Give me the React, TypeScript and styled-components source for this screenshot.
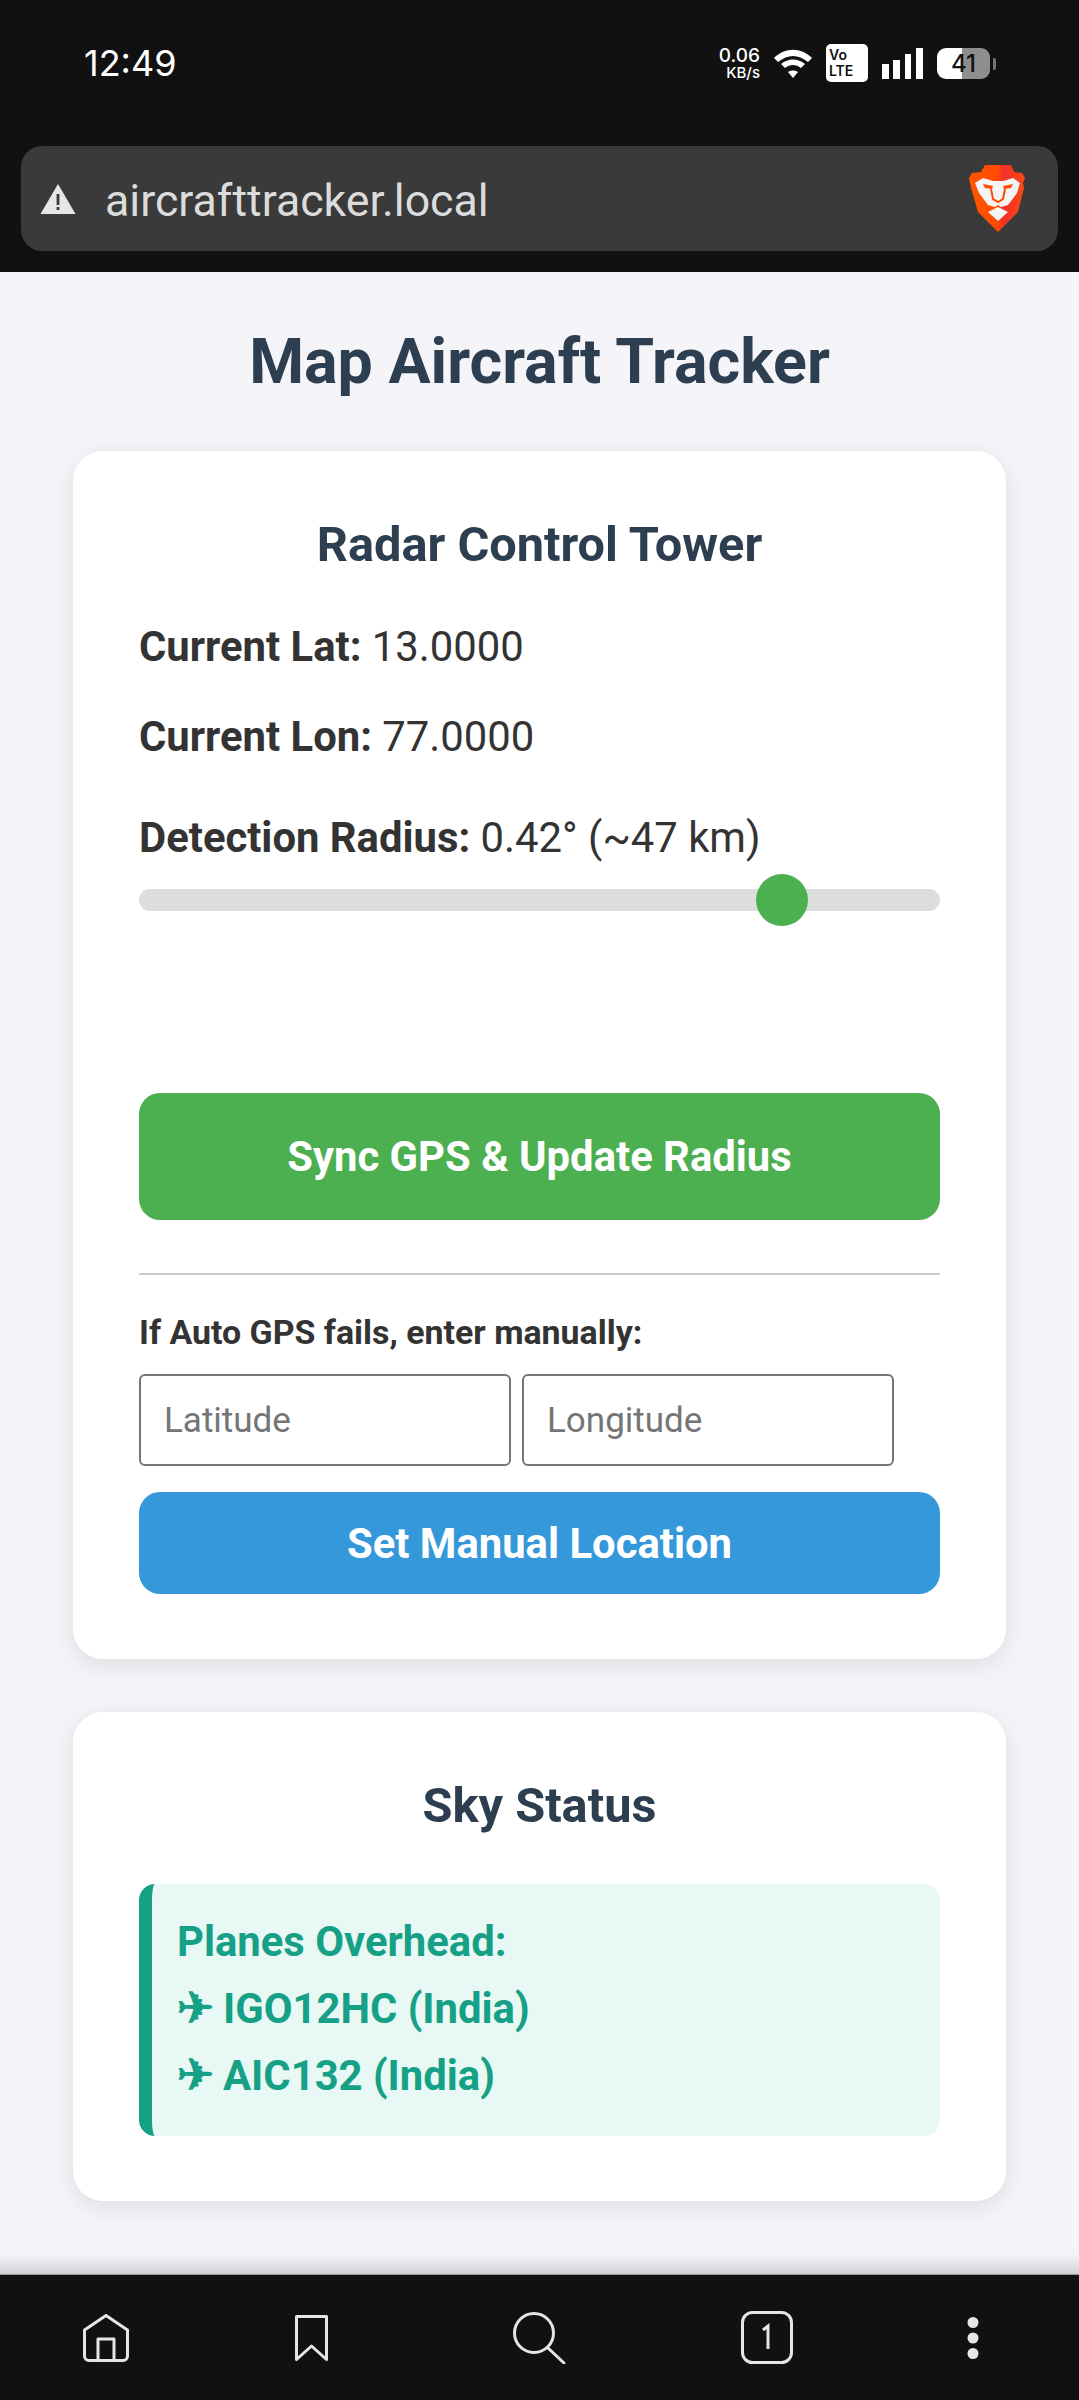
import React from "react";
import styled, { createGlobalStyle } from "styled-components";

const GlobalStyle = createGlobalStyle`
  html, body {
    margin: 0;
    padding: 0;
    background: #f4f4f9;
  }
  * {
    box-sizing: border-box;
  }
`;

const Screen = styled.div`
  width: 1079px;
  height: 2400px;
  display: flex;
  flex-direction: column;
  overflow: hidden;
  font-family: Roboto, "Liberation Sans", sans-serif;
  color: #333;
`;

const BrowserChrome = styled.header`
  height: 272px;
  flex: none;
  background: #111112;
  padding: 0 21px;
  display: flex;
  flex-direction: column;
`;

const StatusBar = styled.div`
  height: 146px;
  padding: 41px 68px 0 63px;
  display: flex;
  justify-content: space-between;
  align-items: flex-start;
  color: #fff;
`;

const Clock = styled.span`
  font-size: 36px;
  line-height: 44px;
  font-family: Inter, Roboto, sans-serif;
  font-weight: 400;
`;

const StatusIcons = styled.div`
  display: flex;
  align-items: center;
  gap: 14px;
  height: 40px;
  margin-top: 2px;
`;

const NetSpeed = styled.div`
  display: flex;
  flex-direction: column;
  align-items: flex-end;
  font-family: Inter, Roboto, sans-serif;
  font-weight: 500;
  font-size: 19px;
  line-height: 19px;

  small {
    font-size: 15px;
    line-height: 15px;
  }
`;

const VoLte = styled.div`
  width: 42px;
  height: 38px;
  border-radius: 5px;
  background: #fff;
  color: #111;
  font-family: Inter, Roboto, sans-serif;
  font-size: 14px;
  line-height: 16px;
  font-weight: 600;
  padding: 3px 0 0 3px;
`;

const Battery = styled.div`
  position: relative;
  width: 53px;
  height: 31px;
  border-radius: 9px;
  background: linear-gradient(90deg, #fff 0 47%, #8e8e8e 47% 100%);
  color: #111;
  font-family: Inter, Roboto, sans-serif;
  font-size: 24px;
  font-weight: 500;
  line-height: 31px;
  text-align: center;

  &::after {
    content: "";
    position: absolute;
    right: -6px;
    top: 10px;
    width: 3px;
    height: 12px;
    border-radius: 0 2px 2px 0;
    background: #6f6f6f;
  }
`;

const AddressBar = styled.div`
  height: 105px;
  background: #3a3a3a;
  border-radius: 21px;
  display: flex;
  align-items: center;
  padding: 0 33px 0 19px;
`;

const AddressText = styled.span`
  flex: 1;
  margin: 5px 0 0 29px;
  color: #dcdcdc;
  font-size: 44.700px;
  font-weight: 400;
`;

const Page = styled.main`
  flex: 1;
  min-height: 0;
  background: #f4f4f9;
  padding: 0 73px;
  position: relative;

  &::after {
    content: "";
    position: absolute;
    left: 0;
    right: 0;
    bottom: 0;
    height: 20px;
    background: linear-gradient(180deg, rgba(0, 0, 0, 0), rgba(0, 0, 0, 0.14));
  }
`;

const PageTitle = styled.h1`
  margin: 0;
  padding-top: 55px;
  height: 179px;
  text-align: center;
  font-size: 62.700px;
  line-height: 70px;
  font-weight: 700;
  color: #2c3e50;
`;

const Card = styled.section`
  background: #fff;
  border-radius: 30px;
  box-shadow: 0 6px 24px rgba(0, 0, 0, 0.1);
  padding: 66px 66px 65px;
  margin-bottom: 53px;
`;

const CardTitle = styled.h2`
  margin: 0;
  text-align: center;
  font-size: 48.700px;
  line-height: 56px;
  font-weight: 700;
  color: #2c3e50;
`;

const ReadoutList = styled.div`
  margin-top: 49px;
`;

const Readout = styled.p<{ $gap: number }>`
  margin: 0 0 ${({ $gap }) => $gap}px;
  font-size: 41.800px;
  line-height: 50px;

  b {
    font-weight: 700;
  }
`;

const SliderTrack = styled.div`
  position: relative;
  height: 22px;
  margin-top: 26px;
  background: #dddddd;
  border-radius: 11px;
`;

const SliderThumb = styled.div`
  position: absolute;
  top: -15px;
  width: 52px;
  height: 52px;
  border-radius: 50%;
  background: #4caf50;
`;

const ActionButton = styled.button<{ $bg: string; $height: number; $top: number }>`
  display: block;
  width: 100%;
  height: ${({ $height }) => $height}px;
  margin-top: ${({ $top }) => $top}px;
  border: 0;
  border-radius: 21px;
  background: ${({ $bg }) => $bg};
  color: #fff;
  font-family: inherit;
  font-size: 41.800px;
  font-weight: 700;
`;

const Divider = styled.hr`
  margin: 53px 0 0;
  border: 0;
  height: 2px;
  background: #cccccc;
`;

const ManualLabel = styled.p`
  margin: 36px 0 0;
  font-size: 33.900px;
  line-height: 44px;
  font-weight: 700;
`;

const ManualInputs = styled.div`
  display: flex;
  gap: 11px;
  margin-top: 19px;
`;

const CoordInput = styled.input`
  width: 372px;
  height: 92px;
  padding: 0 23px;
  border: 2px solid #767676;
  border-radius: 6px;
  background: #fff;
  font-family: inherit;
  font-size: 35px;

  &::placeholder {
    color: #757575;
    opacity: 1;
  }
`;

const PlanesBox = styled.div`
  margin-top: 50px;
  height: 252px;
  padding: 24px 0 0 25px;
  background: #e8f8f5;
  border-left: 13px solid #16a085;
  border-radius: 16px;
  color: #16a085;
  font-size: 41.800px;
  line-height: 67px;
  font-weight: 700;
`;

const PlaneGlyph = styled.span`
  display: inline-block;
  width: 46px;
  font-size: 44px;
  line-height: 40px;
  font-weight: 700;
`;

const BottomNav = styled.nav`
  height: 126px;
  flex: none;
  background: #111112;
  border-top: 1px solid #999;
  display: grid;
  grid-template-columns: 212px 199px 257px 198px 213px;
  align-items: center;
  justify-items: center;
`;

const WarningIcon = () => (
  <svg width="36" height="32" viewBox="0 0 36 32">
    <path d="M18 1 35.500 31H.5z" fill="#e6e6e6" />
    <rect x="16.600" y="11" width="2.800" height="11" fill="#3a3a3a" />
    <rect x="16.600" y="24" width="2.800" height="3" fill="#3a3a3a" />
  </svg>
);

const BraveLogo = () => (
  <svg width="56" height="67" viewBox="0 0 56 67">
    <defs>
      <linearGradient id="brave" x1="0" x2="1" y1="0" y2="0">
        <stop offset="0" stopColor="#ff5500" />
        <stop offset="0.5" stopColor="#ff4c00" />
        <stop offset="0.62" stopColor="#f4302a" />
        <stop offset="1" stopColor="#fb4a10" />
      </linearGradient>
    </defs>
    <path
      d="M16 0h26l3 7 8 1 3 5-2 5 1 5-6 24-20 20L9 47 2 23l-1-5-1-5 3-5 9-1z"
      fill="url(#brave)"
    />
    <path d="M6 18l8-5 10 3h10l10-3 7 5-3 10-9 12-7 2-3-2-3 2-7-2-9-12z" fill="#f4f4f4" />
    <path d="M14 19l10 2-1 3-7-1zM44 19l-10 2 1 3 7-1z" fill="#ff4c00" />
    <path d="M22 24l2 10 5 3 5-3 2-10" fill="none" stroke="#ff4c00" strokeWidth="2" />
    <path d="M19 47l10-5 10 5-10 9z" fill="#f4f4f4" />
  </svg>
);

const WifiIcon = () => (
  <svg width="38" height="29" viewBox="0 0 38 29">
    <path d="M0 9c11-11 27-11 38 0l-4 4C24 5 14 5 4 13z" fill="#fff" />
    <path d="M7 15c7-6 17-6 24 0l-4 4c-5-4-11-4-16 0z" fill="#fff" />
    <path d="M14 23c3-2 7-2 10 0l-5 6z" fill="#fff" />
  </svg>
);

const SignalIcon = () => (
  <svg width="41" height="31" viewBox="0 0 41 31" fill="#fff">
    <rect x="0" y="16" width="7" height="15" />
    <rect x="11" y="12" width="7" height="19" />
    <rect x="23" y="6" width="6" height="25" />
    <rect x="34" y="0" width="7" height="31" />
  </svg>
);

const navStroke = {
  fill: "none",
  stroke: "#e6e6e6",
  strokeWidth: 3,
  strokeLinejoin: "round" as const,
  strokeLinecap: "round" as const,
};

const HomeIcon = () => (
  <svg width="46" height="48" viewBox="0 0 46 48" {...navStroke}>
    <path d="M23 1.500 44.500 16v26a4.500 4.500 0 0 1-4.500 4.500H6A4.500 4.500 0 0 1 1.500 42V16z" />
    <path d="M15 46V25h16v21" />
  </svg>
);

const BookmarkIcon = () => (
  <svg width="33" height="46" viewBox="0 0 33 46" {...navStroke}>
    <path d="M1.500 1.500h30v43L16.500 31l-15 13.500z" />
  </svg>
);

const SearchIcon = () => (
  <svg width="53" height="52" viewBox="0 0 53 52" {...navStroke}>
    <circle cx="21" cy="21" r="19.500" />
    <path d="M35 36l16 15" />
  </svg>
);

const TabsIcon = () => (
  <svg width="52" height="53" viewBox="0 0 52 53">
    <rect x="1.500" y="1.500" width="49" height="50" rx="10" fill="none" stroke="#e6e6e6" strokeWidth="3" />
    <path d="M22 19l5-4v23" fill="none" stroke="#e6e6e6" strokeWidth="3" />
  </svg>
);

const MenuIcon = () => (
  <svg width="12" height="42" viewBox="0 0 12 42" fill="#e6e6e6">
    <circle cx="6" cy="5.500" r="5.500" />
    <circle cx="6" cy="21" r="5.500" />
    <circle cx="6" cy="36.500" r="5.500" />
  </svg>
);

export default function App() {
  return (
    <>
      <GlobalStyle />
      <Screen>
        <BrowserChrome>
          <StatusBar>
            <Clock>12:49</Clock>
            <StatusIcons>
              <NetSpeed>
                <span>0.06</span>
                <small>KB/s</small>
              </NetSpeed>
              <WifiIcon />
              <VoLte>
                Vo
                <br />
                LTE
              </VoLte>
              <SignalIcon />
              <Battery>41</Battery>
            </StatusIcons>
          </StatusBar>
          <AddressBar>
            <WarningIcon />
            <AddressText>aircrafttracker.local</AddressText>
            <BraveLogo />
          </AddressBar>
        </BrowserChrome>

        <Page>
          <PageTitle>Map Aircraft Tracker</PageTitle>

          <Card>
            <CardTitle>Radar Control Tower</CardTitle>
            <ReadoutList>
              <Readout $gap={40}>
                <b>Current Lat:</b> 13.0000
              </Readout>
              <Readout $gap={51}>
                <b>Current Lon:</b> 77.0000
              </Readout>
              <Readout $gap={0}>
                <b>Detection Radius:</b> 0.42° (~47 km)
              </Readout>
            </ReadoutList>
            <SliderTrack>
              <SliderThumb style={{ left: `${0.77 * 100}%` }} />
            </SliderTrack>
            <ActionButton $bg="#4caf50" $height={127} $top={182}>
              Sync GPS &amp; Update Radius
            </ActionButton>
            <Divider />
            <ManualLabel>If Auto GPS fails, enter manually:</ManualLabel>
            <ManualInputs>
              <CoordInput placeholder="Latitude" />
              <CoordInput placeholder="Longitude" />
            </ManualInputs>
            <ActionButton $bg="#3498db" $height={102} $top={26}>
              Set Manual Location
            </ActionButton>
          </Card>

          <Card>
            <CardTitle>Sky Status</CardTitle>
            <PlanesBox>
              Planes Overhead:
              <br />
              <PlaneGlyph>✈</PlaneGlyph>IGO12HC (India)
              <br />
              <PlaneGlyph>✈</PlaneGlyph>AIC132 (India)
            </PlanesBox>
          </Card>
        </Page>

        <BottomNav>
          <HomeIcon />
          <BookmarkIcon />
          <SearchIcon />
          <TabsIcon />
          <MenuIcon />
        </BottomNav>
      </Screen>
    </>
  );
}
